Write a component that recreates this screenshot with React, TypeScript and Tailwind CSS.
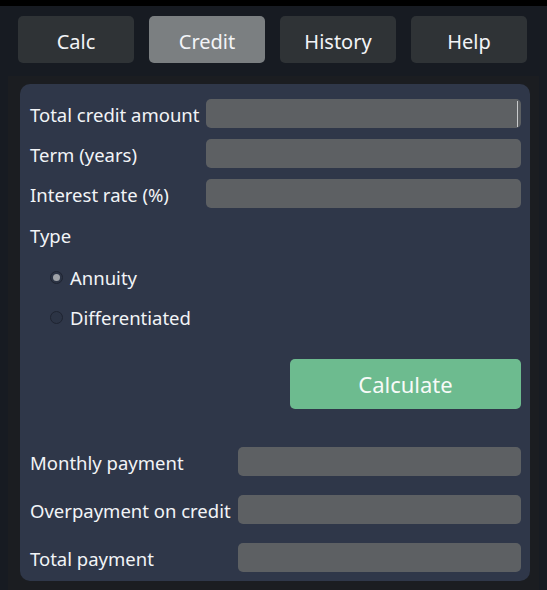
import React from "react";

const font = { fontFamily: '"Noto Sans", "Open Sans", sans-serif' };

function Field({ label, labelW, caret }: { label: string; labelW: string; caret?: boolean }) {
  return (
    <div className="flex items-center h-[29px]">
      <div className={`${labelW} shrink-0 pt-[4px] text-[18.5px] leading-none text-[#f2f4f7] whitespace-nowrap`}>{label}</div>
      <div className="flex-1 h-[29px] rounded-[5px] bg-[#5d6063] flex items-center justify-end pr-[3px]">
        {caret && <div className="w-px h-[26px] bg-[#c8cacc]" />}
      </div>
    </div>
  );
}

function Radio({ checked, label }: { checked?: boolean; label: string }) {
  return (
    <div className="flex items-center h-[20px] pl-[20px]">
      <div className="w-[13px] h-[13px] rounded-full border border-[#1f2431] bg-[#2c3445] flex items-center justify-center">
        {checked && <div className="w-[7px] h-[7px] rounded-full bg-[#a0a3a8]" />}
      </div>
      <span className="ml-[7px] pt-[2px] text-[18.5px] leading-none text-[#f2f4f7]">{label}</span>
    </div>
  );
}

export default function App() {
  const tabs = ["Calc", "Credit", "History", "Help"];
  return (
    <div className="w-[547px] h-[590px] bg-[#171b22] overflow-hidden" style={font}>
      <div className="h-[6px] bg-black" />
      <div className="flex gap-[15px] pl-[18px] pt-[10px]">
        {tabs.map((t) => (
          <div
            key={t}
            className={`w-[116px] h-[47px] rounded-[5px] flex items-center justify-center pt-[4px] text-[20px] text-[#f2f4f7] ${
              t === "Credit" ? "bg-[#7b7f81]" : "bg-[#2f3336]"
            }`}
          >
            {t}
          </div>
        ))}
      </div>
      <div className="mt-[13px] ml-[8px] w-[531px] h-[520px] bg-[#1b1d21] pl-[12px] pt-[8px]">
        <div className="w-[510px] h-[497px] rounded-[10px] bg-[#2f3749] pt-[15px] pl-[10px] pr-[9px]">
          <div className="flex flex-col gap-[11px]">
            <Field label="Total credit amount" labelW="w-[176px]" caret />
            <Field label="Term (years)" labelW="w-[176px]" />
            <Field label="Interest rate (%)" labelW="w-[176px]" />
          </div>
          <div className="mt-[17px] h-[20px] flex items-center pt-[2px] text-[18.5px] leading-none text-[#f2f4f7]">Type</div>
          <div className="mt-[22px] flex flex-col gap-[20px]">
            <Radio checked label="Annuity" />
            <Radio label="Differentiated" />
          </div>
          <div className="mt-[32px] flex justify-end">
            <div className="w-[231px] h-[50px] rounded-[5px] bg-[#6dbb8f] flex items-center justify-center text-[22px] text-[#f7faf8]">
              Calculate
            </div>
          </div>
          <div className="mt-[38px] flex flex-col gap-[19px]">
            <Field label="Monthly payment" labelW="w-[208px]" />
            <Field label="Overpayment on credit" labelW="w-[208px]" />
            <Field label="Total payment" labelW="w-[208px]" />
          </div>
        </div>
      </div>
    </div>
  );
}
